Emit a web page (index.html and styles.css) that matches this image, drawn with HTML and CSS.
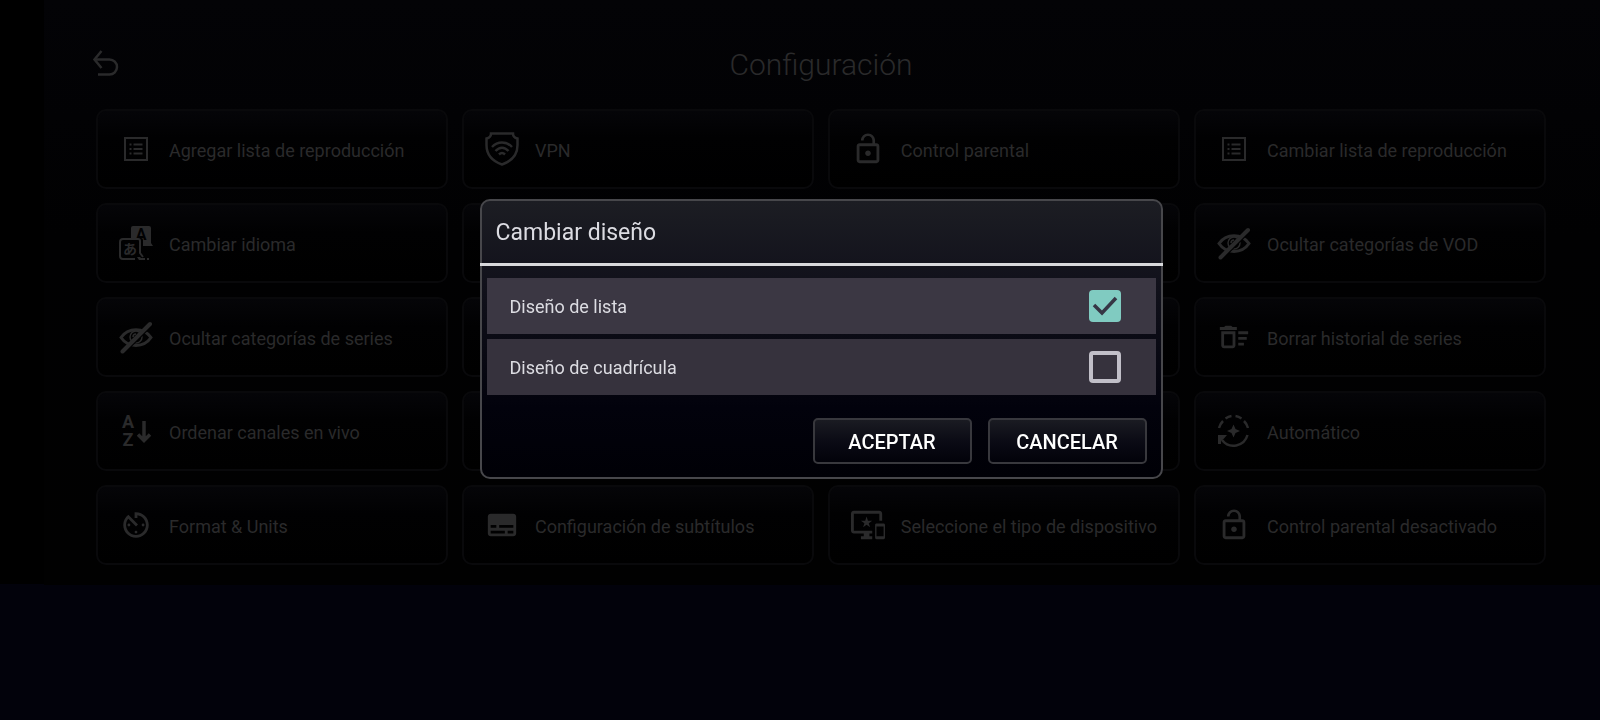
FILE: index.html
```html
<!DOCTYPE html>
<html lang="es">
<head>
  <meta charset="UTF-8">
  <meta name="viewport" content="width=device-width, initial-scale=1.0">
  <title>Configuración</title>
  <link rel="stylesheet" href="styles.css">
</head>
<body>

  <!-- icons used more than once -->
  <svg class="sprite" aria-hidden="true">
    <symbol id="icon-list" viewBox="0 0 34 34">
      <rect x="6" y="6" width="22" height="22" fill="none" stroke="currentColor" stroke-width="2"/>
      <path d="M10.500 12.500h2M10.500 17h2M10.500 21.500h2M14.500 12.500h9M14.500 17h9M14.500 21.500h9" stroke="currentColor" stroke-width="2"/>
    </symbol>
    <symbol id="icon-lock" viewBox="0 0 24 24">
      <path fill="currentColor" d="M12 17c1.100 0 2-.9 2-2s-.9-2-2-2-2 .9-2 2 .9 2 2 2zm6-9h-1V6c0-2.760-2.240-5-5-5S7 3.240 7 6h1.900c0-1.710 1.390-3.100 3.100-3.100 1.710 0 3.100 1.390 3.100 3.100v2H6c-1.100 0-2 .9-2 2v10c0 1.100.9 2 2 2h12c1.100 0 2-.9 2-2V10c0-1.100-.9-2-2-2zm0 12H6V10h12v10z"/>
    </symbol>
    <symbol id="icon-hide" viewBox="0 0 34 34">
      <path d="M2 17.500C9 7 25 7 32 17.500C25 28 9 28 2 17.500z" fill="none" stroke="currentColor" stroke-width="3"/>
      <circle cx="17" cy="17" r="6" fill="none" stroke="currentColor" stroke-width="1.500"/>
      <path d="M14 17a3 3 0 0 1 3-3" fill="none" stroke="currentColor" stroke-width="1.500"/>
      <path d="M5 33L34 4" stroke="#010102" stroke-width="2"/>
      <path d="M3.500 31.500L31 4" stroke="currentColor" stroke-width="4" stroke-linecap="round"/>
    </symbol>
  </svg>

  <main class="screen">
    <header class="topbar">
      <button class="back" type="button" aria-label="Volver">
        <svg viewBox="0 0 28 28" fill="none" stroke="currentColor" stroke-width="2.500">
          <path d="M9.500 1L2.500 9.500L9.500 18"/>
          <path d="M2 9.500H17.500a7.500 7.500 0 0 1 0 15H6"/>
        </svg>
      </button>
      <h1>Configuración</h1>
    </header>

    <div class="grid">
      <button class="card" type="button">
        <svg class="icon"><use href="#icon-list"/></svg>
        <span>Agregar lista de reproducción</span>
      </button>
      <button class="card" type="button">
        <svg class="icon" viewBox="0 0 34 34" fill="none" stroke="currentColor" stroke-width="2.500">
          <path d="M6 1.500H28C28 4 30 6 32.500 6.500V13C32.500 22 27 29 17 32.500C7 29 1.500 22 1.500 13V6.500C4 6 6 4 6 1.500z"/>
          <path d="M7 15C12.500 9 21.500 9 27 15M10.500 19C14.500 14.500 19.500 14.500 23.500 19M14 22.500C16 20.500 18 20.500 20 22.500"/>
        </svg>
        <span>VPN</span>
      </button>
      <button class="card" type="button">
        <svg class="icon"><use href="#icon-lock"/></svg>
        <span>Control parental</span>
      </button>
      <button class="card" type="button">
        <svg class="icon"><use href="#icon-list"/></svg>
        <span>Cambiar lista de reproducción</span>
      </button>

      <button class="card" type="button">
        <svg class="icon" viewBox="0 0 34 34">
          <path fill="currentColor" d="M14 0H30a2 2 0 0 1 2 2V17L34 20H24V14a2 2 0 0 0-2-2H12V2a2 2 0 0 1 2-2z"/>
          <text class="glyph-latin" x="22" y="14">A</text>
          <path fill="none" stroke="currentColor" stroke-width="2" d="M16 33H4a3 3 0 0 1-3-3V16a3 3 0 0 1 3-3H19a2 2 0 0 1 2 2V27L24 31"/>
          <path fill="currentColor" d="M18 31h3l1 1h4v2h-6zM28 32h2v2h-2z"/>
          <text class="glyph-kana" x="11" y="28">あ</text>
        </svg>
        <span>Cambiar idioma</span>
      </button>
      <div class="card"></div>
      <div class="card"></div>
      <button class="card" type="button">
        <svg class="icon"><use href="#icon-hide"/></svg>
        <span>Ocultar categorías de VOD</span>
      </button>

      <button class="card" type="button">
        <svg class="icon"><use href="#icon-hide"/></svg>
        <span>Ocultar categorías de series</span>
      </button>
      <div class="card"></div>
      <div class="card"></div>
      <button class="card" type="button">
        <svg class="icon" viewBox="0 0 24 24">
          <path fill="currentColor" d="M15 16h4v2h-4zm0-8h7v2h-7zm0 4h6v2h-6zM3 18c0 1.100.9 2 2 2h6c1.100 0 2-.9 2-2V8H3v10zm2-8h6v8H5v-8zm5-6H6L5 5H2v2h12V5h-3z"/>
        </svg>
        <span>Borrar historial de series</span>
      </button>

      <button class="card" type="button">
        <svg class="icon" viewBox="0 0 34 34">
          <text class="glyph-sort" x="9" y="14">A</text>
          <text class="glyph-sort" x="9" y="32">Z</text>
          <path d="M25 7V26M19 20.500L25 26.500L31 20.500" fill="none" stroke="currentColor" stroke-width="3.500"/>
        </svg>
        <span>Ordenar canales en vivo</span>
      </button>
      <div class="card"></div>
      <div class="card"></div>
      <button class="card" type="button">
        <svg class="icon" viewBox="0 0 34 34" fill="none" stroke="currentColor" stroke-width="2.500">
          <path d="M2 14a15 15 0 0 1 4-7M8.500 4.500a15 15 0 0 1 6-2.400M18.500 2.100a15 15 0 0 1 6 2.400M27 7a15 15 0 0 1 4 7"/>
          <path d="M30.500 21A14.500 14.500 0 0 1 5 26"/>
          <path fill="currentColor" stroke="none" d="M1 21H10L7 24.500L4 27V30H1z"/>
          <path fill="currentColor" stroke="none" d="M16.500 10.500L18.500 15L23 17L18.500 19L16.500 23.500L14.500 19L10 17L14.500 15z"/>
        </svg>
        <span>Automático</span>
      </button>

      <button class="card" type="button">
        <svg class="icon" viewBox="0 0 24 24">
          <path fill="currentColor" d="M11 17c0 .55.45 1 1 1s1-.45 1-1-.45-1-1-1-1 .45-1 1zm0-14v4h2V5.080c3.390.49 6 3.390 6 6.920 0 3.870-3.130 7-7 7s-7-3.130-7-7c0-1.680.59-3.220 1.580-4.420L12 13l1.410-1.410-6.800-6.800v.02C4.420 6.450 3 9.050 3 12c0 4.970 4.020 9 9 9 4.970 0 9-4.030 9-9s-4.030-9-9-9h-1zm7 9c0-.55-.45-1-1-1s-1 .45-1 1 .45 1 1 1 1-.45 1-1zM6 12c0 .55.45 1 1 1s1-.45 1-1-.45-1-1-1-1 .45-1 1z"/>
        </svg>
        <span>Format &amp; Units</span>
      </button>
      <button class="card" type="button">
        <svg class="icon" viewBox="0 0 24 24">
          <path fill="currentColor" d="M20 4H4c-1.100 0-2 .9-2 2v12c0 1.100.9 2 2 2h16c1.100 0 2-.9 2-2V6c0-1.100-.9-2-2-2zM4 12h4v2H4v-2zm10 6H4v-2h10v2zm6 0h-4v-2h4v2zm0-4H10v-2h10v2z"/>
        </svg>
        <span>Configuración de subtítulos</span>
      </button>
      <button class="card" type="button">
        <svg class="icon" viewBox="0 0 24 24">
          <path fill="currentColor" d="M23 11.010L18 11c-.55 0-1 .45-1 1v9c0 .55.45 1 1 1h5c.55 0 1-.45 1-1v-9c0-.55-.45-.99-1-.99zM23 20h-5v-7h5v7zM20 2H2C.89 2 0 2.890 0 4v12c0 1.100.89 2 2 2h7v2H7v2h8v-2h-2v-2h2v-2H2V4h18v5h2V4c0-1.110-.9-2-2-2zm-8.030 7L11 6l-.97 3H7l2.470 1.760-.94 2.910 2.470-1.800 2.470 1.800-.94-2.910L15 9h-3.030z"/>
        </svg>
        <span>Seleccione el tipo de dispositivo</span>
      </button>
      <button class="card" type="button">
        <svg class="icon"><use href="#icon-lock"/></svg>
        <span>Control parental desactivado</span>
      </button>
    </div>
  </main>

  <div class="overlay">
    <form class="dialog" role="dialog" aria-labelledby="dialog-title">
      <h2 id="dialog-title">Cambiar diseño</h2>
      <div class="options">
        <label class="option" for="layout-list">
          <span>Diseño de lista</span>
          <input type="checkbox" id="layout-list" checked>
        </label>
        <label class="option" for="layout-grid">
          <span>Diseño de cuadrícula</span>
          <input type="checkbox" id="layout-grid">
        </label>
      </div>
      <div class="actions">
        <button type="button">ACEPTAR</button>
        <button type="button">CANCELAR</button>
      </div>
    </form>
  </div>

</body>
</html>
```
FILE: styles.css
```css
* {
  box-sizing: border-box;
}

body {
  font-family: Roboto, sans-serif;
  margin: 0;
  padding-left: 44px;
  min-height: 100vh;
  background: linear-gradient(90deg, #000 44px, transparent 44px) 0 0 / 100% 584px no-repeat #02020b;
}

button {
  font-family: inherit;
  cursor: pointer;
}

.sprite {
  position: absolute;
  width: 0;
  height: 0;
}

/* settings screen, dimmed behind the dialog */
.screen {
  padding: 36px 54px 20px 52px;
  background: linear-gradient(#030306, #010102 40%, #010101);
  color: #2a2a2b;
}

.topbar {
  display: grid;
  grid-template-columns: 28px 1fr 28px;
  align-items: center;
  height: 56px;
  margin: 0 0 17px;
}

.topbar h1 {
  margin: 0;
  padding-top: 2px;
  font-size: 30px;
  font-weight: 300;
  line-height: 40px;
  text-align: center;
}

.back {
  width: 28px;
  height: 28px;
  margin-left: -4px;
  padding: 0;
  border: none;
  background: none;
  color: inherit;
}

.back svg {
  display: block;
  width: 28px;
  height: 28px;
}

.grid {
  display: grid;
  grid-template-columns: repeat(4, 1fr);
  gap: 14px;
}

.card {
  display: flex;
  align-items: center;
  gap: 16px;
  height: 80px;
  padding: 0 21px;
  border: 2px solid #09090b;
  border-radius: 10px;
  background: linear-gradient(#050508, #010102 35%, #000);
  color: inherit;
  font-size: 18px;
  text-align: left;
  white-space: nowrap;
}

.card span {
  padding-top: 2px;
}

.icon {
  flex: none;
  width: 34px;
  height: 34px;
  overflow: visible;
}

.glyph-latin,
.glyph-kana,
.glyph-sort {
  text-anchor: middle;
  font-weight: bold;
  fill: currentColor;
}

.glyph-latin {
  font-size: 16px;
  fill: #010102;
}

.glyph-kana {
  font-family: "Noto Sans CJK JP", sans-serif;
  font-size: 14px;
}

.glyph-sort {
  font-size: 18px;
}

/* dialog */
.overlay {
  position: fixed;
  inset: 0 2px 42px 44px;
  display: flex;
  align-items: center;
  justify-content: center;
}

.dialog {
  width: 683px;
  max-width: 100%;
  border: 2px solid #47474b;
  border-radius: 10px;
  background: linear-gradient(#1c1d23, #11111b 30%, #02020c 75%, #000006);
  color: #dcdce2;
}

.dialog h2 {
  margin: 0 -2px;
  padding: 2px 16px 0;
  border-bottom: 3px solid #d8d9dc;
  font-size: 23px;
  font-weight: 400;
  line-height: 60px;
}

.options {
  display: flex;
  flex-direction: column;
  gap: 5px;
  padding: 12px 5px 0;
}

.option {
  display: flex;
  align-items: center;
  justify-content: space-between;
  height: 56px;
  padding: 0 35px 0 23px;
  background: #3b3743;
  font-size: 18px;
}

.option + .option {
  background: #36323d;
}

.option input {
  appearance: none;
  width: 32px;
  height: 32px;
  margin: 0;
  border: 4px solid #c1bfc8;
  border-radius: 4px;
}

.option input:checked {
  border: none;
  background: #80cbc1 url("data:image/svg+xml,%3Csvg xmlns='http://www.w3.org/2000/svg' viewBox='0 0 32 32'%3E%3Cpath d='M5 15l8 8L27 8' fill='none' stroke='%23363645' stroke-width='3.500'/%3E%3C/svg%3E");
}

.actions {
  display: flex;
  justify-content: flex-end;
  gap: 16px;
  padding: 23px 14px 13px;
}

.actions button {
  width: 159px;
  height: 46px;
  padding: 2px 0 0;
  border: 2px solid #38383d;
  border-radius: 5px;
  background: linear-gradient(#1a1b22, #0b0b15 50%, #02020a);
  color: #fff;
  font-size: 20px;
  font-weight: 500;
}
```
